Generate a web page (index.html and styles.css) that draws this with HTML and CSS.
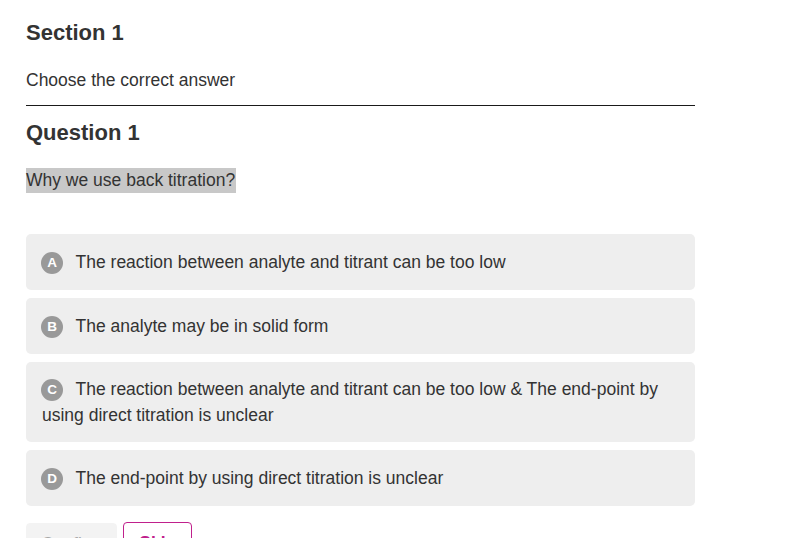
FILE: index.html
```html
<!DOCTYPE html>
<html lang="en">
<head>
<meta charset="utf-8">
<title>Section 1</title>
<link rel="stylesheet" href="styles.css">
</head>
<body>
<main class="quiz">
  <h2 class="title">Section 1</h2>
  <p class="instructions">Choose the correct answer</p>
  <hr class="divider">
  <h2 class="title question-title">Question 1</h2>
  <div class="question-text">Why we use back titration?</div>
  <ul class="options">
    <li class="option"><div class="option-body"><span class="badge">A</span> The reaction between analyte and titrant can be too low</div></li>
    <li class="option"><div class="option-body"><span class="badge">B</span> The analyte may be in solid form</div></li>
    <li class="option"><div class="option-body"><span class="badge">C</span> The reaction between analyte and titrant can be too low &amp; The end-point by using direct titration is unclear</div></li>
    <li class="option"><div class="option-body"><span class="badge">D</span> The end-point by using direct titration is unclear</div></li>
  </ul>
  <div class="actions">
    <button class="btn btn-confirm" disabled>Confirm</button>
    <button class="btn btn-skip">Skip</button>
  </div>
</main>
</body>
</html>
```
FILE: styles.css
```css
html, body {
  margin: 0;
  padding: 0;
  background: #ffffff;
}

body {
  font-family: "Liberation Sans", Arial, sans-serif;
  color: #333333;
}

.quiz {
  width: 669px;
  padding: 20px 0 0 26px;
}

.title {
  margin: 0;
  font-size: 22px;
  line-height: 26px;
  font-weight: bold;
  color: #333333;
}

.instructions {
  margin: 21px 0 0;
  font-size: 17.5px;
  line-height: 26px;
}

.divider {
  margin: 12px 0 0;
  border: 0;
  border-top: 1px solid #1a1a1a;
  height: 0;
}

.question-title {
  margin-top: 14px;
}

.question-text {
  margin-top: 22px;
  width: fit-content;
  font-size: 17.5px;
  line-height: 25px;
  background: #c8c8c8;
  padding-right: 1px;
}

.options {
  list-style: none;
  margin: 41px 0 0;
  padding: 0;
  display: flex;
  flex-direction: column;
  gap: 8px;
}

.option {
  display: flex;
  align-items: center;
  box-sizing: border-box;
  min-height: 56px;
  padding: 14px 16px;
  background: #eeeeee;
  border-radius: 5px;
  font-size: 17.5px;
  line-height: 26px;
  color: #333333;
}

.badge {
  display: inline-block;
  width: 22px;
  height: 22px;
  border-radius: 50%;
  background: #999999;
  color: #ffffff;
  font-size: 13.5px;
  font-weight: bold;
  line-height: 22px;
  text-align: center;
  vertical-align: 1px;
  margin-left: -1px;
  margin-right: 8px;
}

.actions {
  margin-top: 16px;
  display: flex;
  gap: 6px;
}

.btn {
  font-family: "Liberation Sans", Arial, sans-serif;
  font-size: 17.5px;
  height: 42px;
  border-radius: 4px;
  padding: 0 14px;
}

.btn-confirm {
  background: #f3f3f3;
  border: 1px solid #f3f3f3;
  color: #a8a8a8;
  margin-top: 1px;
}

.btn-skip {
  background: #ffffff;
  border: 1px solid #c0208c;
  color: #c0208c;
  font-weight: bold;
  padding: 0 15px;
}
```
